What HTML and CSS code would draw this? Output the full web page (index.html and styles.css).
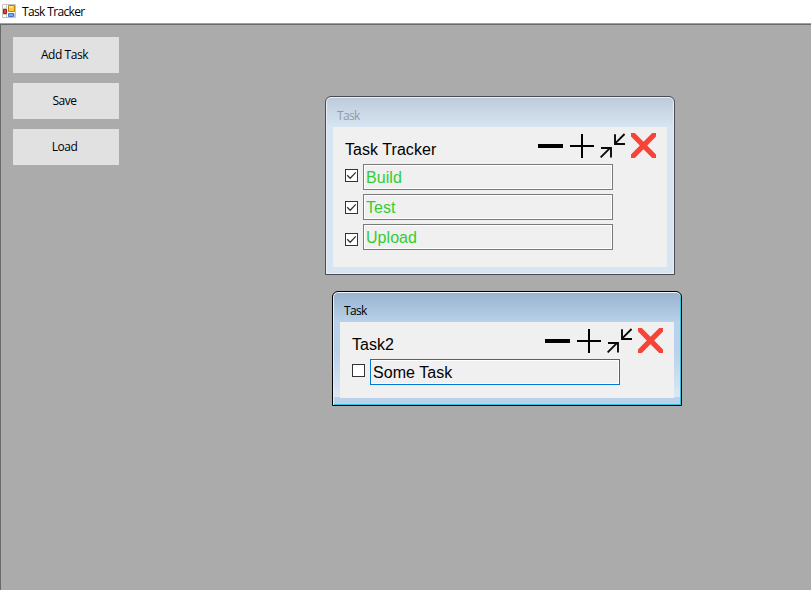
FILE: index.html
```
<!DOCTYPE html>
<html lang="en">
<head>
<meta charset="utf-8">
<title>Task Tracker</title>
<link rel="stylesheet" href="styles.css">
</head>
<body>
<svg width="0" height="0" class="defs">
  <symbol id="minus" viewBox="0 0 25 25"><path d="M0 11h25v4H0z"/></symbol>
  <symbol id="plus" viewBox="0 0 25 25"><path d="M12 1h2v11h11v2H14v11h-2V14H1v-2h11z"/></symbol>
  <symbol id="collapse" viewBox="0 0 25 25"><path d="M24.6 1 15 10.6M15 1.2V11H25M.6 24.4 10.4 14.6M1 15H11V24.6" fill="none" stroke="#0a0a0a" stroke-width="1.9"/></symbol>
  <symbol id="close" viewBox="0 0 25 25"><path d="M0 0h3.8l8.7 8.8L21.2 0H25v3.6l-8.8 8.9 8.8 8.9V25h-3.8l-8.7-8.8L3.8 25H0v-3.6l8.8-8.9L0 3.6z" fill="#f94336"/></symbol>
  <symbol id="check" viewBox="0 0 11 11"><path d="M1.2 5.3 4.2 8.3 9.8 2.4" fill="none" stroke="#333" stroke-width="1.25"/></symbol>
</svg>
<header class="titlebar">
  <svg class="app-icon" width="14" height="14" viewBox="0 0 14 14">
    <path d="M.5.5h13v13H.5z" fill="#fff" stroke="#c4c4c4"/>
    <path d="M4.5 1v12M1 4.5h4M1 10.5h4M12.5 9v4" stroke="#c8c8c8"/>
    <path d="M6.5 1.5h6v6h-6z" fill="#fcc83c" stroke="#bd8200"/>
    <path d="M7 2h4v2H7z" fill="#ffe18b"/>
    <path d="M1.5 5.5h3v4h-3z" fill="#df4938" stroke="#a51b14"/>
    <path d="M6.5 9.5h5v3h-5z" fill="#77a8f8" stroke="#3e73d5"/>
  </svg>
  <span>Task Tracker</span>
</header>
<main class="workspace">
  <nav class="actions">
    <button>Add Task</button>
    <button>Save</button>
    <button>Load</button>
  </nav>

  <section class="window first">
    <div class="caption"><span>Task</span></div>
    <div class="client">
      <div class="head">
        <h2>Task Tracker</h2>
        <div class="tools">
          <svg><use href="#minus"/></svg><svg><use href="#plus"/></svg><svg><use href="#collapse"/></svg><svg><use href="#close"/></svg>
        </div>
      </div>
      <div class="items">
        <div class="checks">
          <span class="box"><svg><use href="#check"/></svg></span>
          <span class="box"><svg><use href="#check"/></svg></span>
          <span class="box"><svg><use href="#check"/></svg></span>
        </div>
        <div class="fields">
          <div class="field done">Build</div>
          <div class="field done">Test</div>
          <div class="field done">Upload</div>
        </div>
      </div>
    </div>
  </section>

  <section class="window second active">
    <div class="caption"><span>Task</span></div>
    <div class="client">
      <div class="head">
        <h2>Task2</h2>
        <div class="tools">
          <svg><use href="#minus"/></svg><svg><use href="#plus"/></svg><svg><use href="#collapse"/></svg><svg><use href="#close"/></svg>
        </div>
      </div>
      <div class="items">
        <div class="checks"><span class="box"></span></div>
        <div class="fields"><div class="field focused">Some Task</div></div>
      </div>
    </div>
  </section>
</main>
</body>
</html>
```
FILE: styles.css
```
* { box-sizing: border-box; }
body {
  margin: 0;
  height: 590px;
  overflow: hidden;
  display: flex;
  flex-direction: column;
  background: #fff;
  font: 12px "Open Sans", "Noto Sans", sans-serif;
  letter-spacing: -0.65px;
  color: #000;
}
.defs { position: absolute; }
.titlebar {
  height: 24px;
  flex: none;
  display: flex;
  align-items: center;
  gap: 6px;
  padding: 0 2px;
  border-bottom: 1px solid #a0a0a0;
}
.app-icon { margin-top: -1px; }
.workspace {
  position: relative;
  flex: 1;
  background: #ababab;
  border-top: 1px solid #696969;
  border-left: 1px solid #696969;
}
.actions {
  display: flex;
  flex-direction: column;
  gap: 10px;
  width: 106px;
  margin: 12px 0 0 12px;
}
.actions button {
  height: 36px;
  border: 0;
  padding: 0 3px 2px 0;
  background: #e1e1e1;
  font: inherit;
  letter-spacing: -0.45px;
  color: #000;
}

/* MDI child windows, freely placed in the workspace */
.window {
  position: absolute;
  width: 350px;
  display: flex;
  flex-direction: column;
  padding: 0 6px 6px;
  border: 1px solid #4c4c50;
  border-radius: 6px 6px 0 0;
  background: linear-gradient(#bccbda, #d7e4f2 30px);
  box-shadow: inset 0 0 0 1px #e9eff7;
}
.window.first { left: 324px; top: 71px; height: 179px; }
.window.second { left: 331px; top: 266px; height: 115px; }
.window.active {
  border-color: #000;
  background:
    linear-gradient(#b9d1ea, #b9d1ea) bottom / 100% 8px no-repeat,
    linear-gradient(#98b3cf, #b9d1ea 30px, #b9d1ea 60px, #dce8f6 105px);
  box-shadow: inset 0 1px #f4f8fc, inset 1px 0 #e3effa, inset -1px -1px #35c4dc;
}
.caption {
  height: 30px;
  flex: none;
  padding: 11px 5px 0;
  line-height: 16px;
  color: #929aa3;
}
.active .caption { color: #000; }
.client {
  flex: 1;
  margin: 0 1px 1px;
  padding: 6px 11px 0 12px;
  background: #f0f0f0;
}
.head {
  display: flex;
  justify-content: space-between;
  height: 31px;
}
h2 {
  margin: 8px 0 0;
  font: 16px/18px "Liberation Sans", Arial, sans-serif;
  letter-spacing: 0.05px;
}
.tools { display: flex; gap: 6px; }
.tools svg { width: 25px; height: 25px; }
.items { display: flex; gap: 5px; }
.checks {
  display: flex;
  flex-direction: column;
  gap: 19px;
  padding-top: 5px;
}
.box {
  display: block;
  width: 13px;
  height: 13px;
  border: 1px solid #333;
  background: #fff;
}
.box svg { display: block; width: 11px; height: 11px; }
.fields { display: flex; flex-direction: column; gap: 4px; }
.field {
  width: 250px;
  height: 26px;
  padding: 4px 2px 2px;
  border: 1px solid #7a7a7a;
  box-shadow: inset 0 0 0 1px #fff;
  font: 16px/18px "Liberation Sans", Arial, sans-serif;
  letter-spacing: 0.05px;
}
.done { color: #32cd32; }
.focused { border-color: #0078d7; }
```
